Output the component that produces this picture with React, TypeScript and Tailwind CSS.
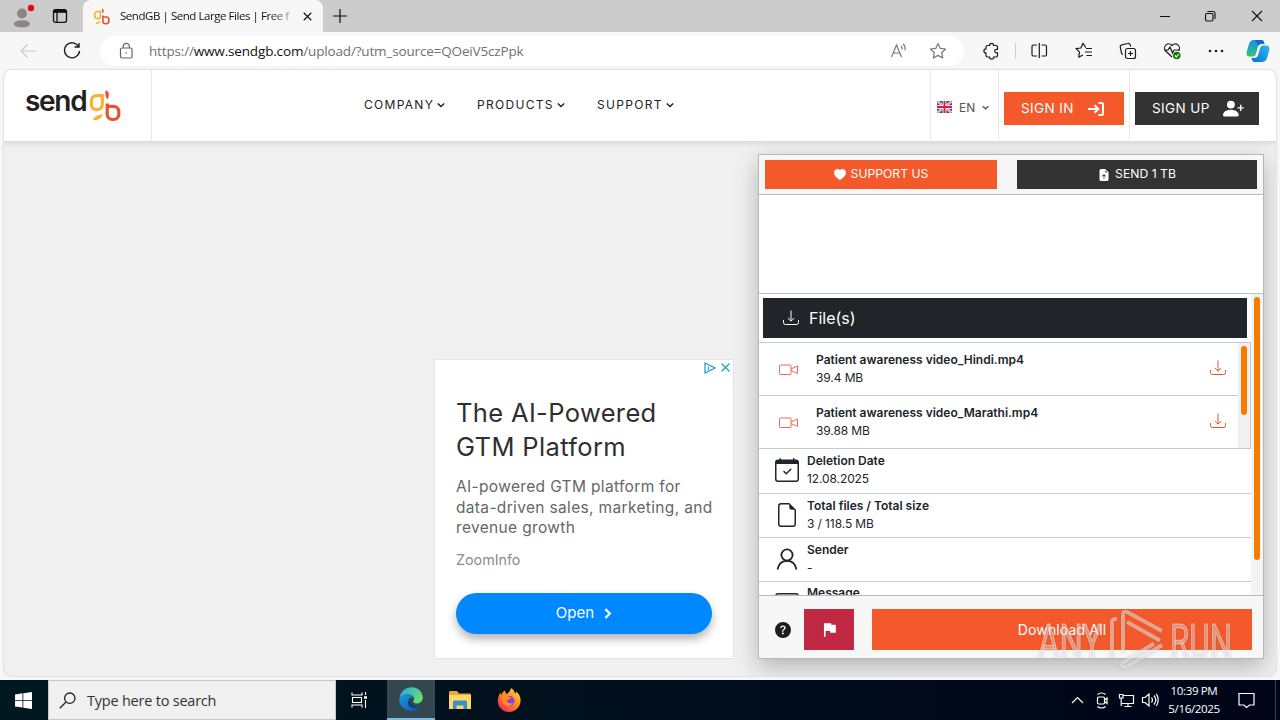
import type { ReactNode } from 'react'
import {
  BsCalendarCheck,
  BsEnvelope,
  BsFileEarmark,
  BsFileEarmarkArrowUpFill,
  BsHeartFill,
  BsPersonPlusFill,
  BsQuestionCircleFill,
} from 'react-icons/bs'
import { MdFlag } from 'react-icons/md'

function GbMark({ className }: { className: string }) {
  return (
    <svg viewBox="0 0 33 33" className={className} fill="none">
      <path d="M14.300 6.700H8.500a5.200 5.200 0 0 0-5.200 5.200v3.600a5.200 5.200 0 0 0 5.200 5.200h.6a5.200 5.200 0 0 0 5.200-5.200z" stroke="#fbb034" strokeWidth="3.200" />
      <path d="M5 31c.8-3.200 4.300-5 10-5.800-1.200 4.300-5.800 6.600-10 5.800z" fill="#fbb034" />
      <path d="M17.800 1c3.200 1.600 4.300 5 1.700 9.500-2.200-2.600-2.800-6.300-1.700-9.500z" fill="#e8532f" />
      <path d="M19.200 14.500v10.800a5.200 5.200 0 0 0 5.200 5.200h1.200a5.200 5.200 0 0 0 5.200-5.200v-2.700a5.200 5.200 0 0 0-5.200-5.200h-6.400" stroke="#e8532f" strokeWidth="3.200" />
    </svg>
  )
}

function TrayDownload({ className }: { className: string }) {
  return (
    <svg viewBox="0 0 16 16" className={className} fill="none" stroke="currentColor" strokeWidth="1">
      <path d="M.5 10v2.500a2 2 0 0 0 2 2h11a2 2 0 0 0 2-2V10M8 .5v10.500M4.800 8L8 11.200 11.200 8" />
    </svg>
  )
}

function SenderIcon({ className }: { className: string }) {
  return (
    <svg viewBox="0 0 24 24" className={className} fill="none" stroke="currentColor" strokeWidth="1.800">
      <circle cx="12" cy="8" r="5.600" />
      <path d="M2.500 22.500C3.500 17 7 13.800 12 13.800s8.500 3.200 9.500 8.700" />
    </svg>
  )
}

function Chevron({ className }: { className: string }) {
  return (
    <svg viewBox="0 0 8 8" className={className} fill="none" stroke="currentColor" strokeWidth="1.500">
      <path d="M.8 2.500L4 5.500l3.200-3" />
    </svg>
  )
}

function TabBar() {
  return (
    <div className="flex h-8 bg-[#cbcbcb] text-[#111]">
      <div className="flex h-8 w-[83px] items-center rounded-br-md">
        <svg viewBox="0 0 24 24" className="ml-[11px] h-6 w-6">
          <circle cx="11" cy="9.500" r="5" fill="#8b8683" />
          <path d="M3 20c0-5 16-5 16 0 0 4.500-16 4.500-16 0z" fill="#8b8683" />
          <circle cx="20" cy="4" r="3.200" fill="#e00b1c" />
        </svg>
        <svg viewBox="0 0 16 16" className="ml-[17px] h-4 w-4" fill="none" stroke="#111" strokeWidth="1.300">
          <rect x="1.500" y="1.700" width="13" height="12.600" rx="2" />
          <path d="M1.500 4h13M5 4v10" />
          <path d="M2 3h12" strokeWidth="2.400" />
        </svg>
      </div>
      <div className="flex w-[240px] items-center rounded-t-lg bg-[#f7f7f7]">
        <GbMark className="ml-[10px] h-[17px] w-[17px]" />
        <span className="ml-[10px] w-[176px] bg-gradient-to-r from-[#111] from-85% to-[#e2e2e2] bg-clip-text font-['Open_Sans','Noto_Sans',sans-serif] text-[11.500px] tracking-[-0.450px] whitespace-nowrap text-transparent">
          SendGB | Send Large Files | Free f
        </span>
        <svg viewBox="0 0 10 10" className="ml-[7px] h-[9px] w-[9px]" stroke="#111" strokeWidth="1.300">
          <path d="M.8.8l8.400 8.400M9.200.8L.8 9.200" />
        </svg>
      </div>
      <svg viewBox="0 0 14 14" className="mt-[9px] ml-[10px] h-[14px] w-[14px]" stroke="#111" strokeWidth="1.200">
        <path d="M7 0v14M0 7h14" />
      </svg>
      <svg viewBox="0 0 104 12" className="mt-[10px] mr-[17px] ml-auto h-3 w-[104px]" fill="none" stroke="#111" strokeWidth="1.100">
        <path d="M1 6.500h10M93 1l10 10M103 1L93 11" />
        <rect x="46.500" y="3.500" width="7.500" height="7.500" rx="1.500" />
        <path d="M48.500 1.500h5.500a2 2 0 0 1 2 2v5.500" />
      </svg>
    </div>
  )
}

function ToolIcon({ className, children }: { className: string; children: ReactNode }) {
  return (
    <svg viewBox="0 0 18 18" className={`h-[18px] w-[18px] shrink-0 ${className}`} fill="none" stroke="currentColor" strokeWidth="1.200">
      {children}
    </svg>
  )
}

function Toolbar() {
  return (
    <div className="flex h-[38px] items-center bg-[#f7f7f7] text-[#1b1b1b]">
      <ToolIcon className="ml-[19px] text-[#c9c9c9]">
        <path d="M17 9H2M8.500 2.500L2 9l6.500 6.500" />
      </ToolIcon>
      <ToolIcon className="ml-[26px]">
        <path d="M15.500 4.500A7.500 7.500 0 1 0 16.500 9M16 1v4h-4.500" strokeWidth="1.400" />
      </ToolIcon>
      <div className="ml-[19px] flex h-[30px] w-[864px] items-center rounded-full bg-white">
        <ToolIcon className="ml-[17px] text-[#666]">
          <rect x="3.500" y="6" width="11.500" height="10" rx="1.500" />
          <path d="M6.300 6V4.300a3 3 0 0 1 6 0V6" />
          <circle cx="9.200" cy="11" r=".8" fill="currentColor" stroke="none" />
        </ToolIcon>
        <span className="ml-[14px] font-['Open_Sans','Noto_Sans',sans-serif] text-[13.500px] tracking-[-0.160px] whitespace-nowrap text-[#707070]">
          https://<span className="text-[#111]">www.sendgb.com</span>/upload/?utm_source=QOeiV5czPpk
        </span>
        <ToolIcon className="ml-auto text-[#777]">
          <path d="M1.500 15L6.500 3l5 12M3.200 11h6.600M11 4c1 .9 1.300 2.200 1 3.500M13 1.800c1.900 1.700 2.500 3.900 2 6.500" />
        </ToolIcon>
        <ToolIcon className="mr-[17px] ml-[21px] text-[#777]">
          <path d="M9 1.500l2.300 4.900 5.300.6-3.900 3.700 1 5.300L9 13.400 4.300 16l1-5.300L1.400 7l5.300-.6z" strokeLinejoin="round" />
        </ToolIcon>
      </div>
      <ToolIcon className="ml-[18px]">
        <path d="M5.500 3.500h2a2.100 2.100 0 0 1 4.200 0H14a1.500 1.500 0 0 1 1.500 1.500v2.300h-1a1.800 1.800 0 0 0 0 3.600h1V13.500a1.500 1.500 0 0 1-1.500 1.500h-2.300a2.100 2.100 0 0 1-4.200 0h-2A1.500 1.500 0 0 1 4 13.500v-2.400a2.100 2.100 0 0 1 0-4.200V5a1.500 1.500 0 0 1 1.500-1.500z" />
      </ToolIcon>
      <div className="ml-[15px] h-4 w-px bg-[#d0d0d0]" />
      <ToolIcon className="ml-[14px]">
        <path d="M7 3H3.500A1.500 1.500 0 0 0 2 4.500v8A1.500 1.500 0 0 0 3.500 14H7M11.500 3H15a1.500 1.500 0 0 1 1.500 1.500v8A1.500 1.500 0 0 1 15 14h-3.500M9.300 1v15" />
      </ToolIcon>
      <ToolIcon className="ml-[27px]">
        <path d="M10.800 5.800L8 1.200 5.800 6 1 6.700l3.500 3.500-.8 5L8 13M11 6.500h6M10 10h7M11.500 13.500H17" strokeLinejoin="round" />
      </ToolIcon>
      <ToolIcon className="ml-[26px]">
        <rect x="6.500" y="6.500" width="10" height="10" rx="2" />
        <path d="M11.500 9v5M9 11.500h5M4 12.500A2 2 0 0 1 2.500 11L1.200 5A2 2 0 0 1 2.800 2.800l6-1.300A2 2 0 0 1 11.300 3l.4 1.500" />
      </ToolIcon>
      <ToolIcon className="ml-[26px]">
        <path d="M9 15L2.500 8.800A4 4 0 0 1 9 3.500a4 4 0 0 1 6.500 5.300M1 8h4l2-3 2.500 6L11 8h6" />
        <circle cx="13.800" cy="13.500" r="3.800" fill="#107c10" stroke="none" />
        <path d="M12 13.500l1.300 1.300 2.400-2.500" stroke="#fff" />
      </ToolIcon>
      <ToolIcon className="ml-[26px]">
        <g fill="currentColor" stroke="none">
          <circle cx="3" cy="9" r="1.300" />
          <circle cx="9" cy="9" r="1.300" />
          <circle cx="15" cy="9" r="1.300" />
        </g>
      </ToolIcon>
      <svg viewBox="0 0 24 24" className="ml-[21px] h-6 w-6 shrink-0">
        <defs>
          <linearGradient id="cpA" x1="0" y1="0" x2="0" y2="1">
            <stop offset="0" stopColor="#1b8fe8" />
            <stop offset="1" stopColor="#35c27c" />
          </linearGradient>
          <linearGradient id="cpB" x1="0" y1="1" x2="1" y2="0">
            <stop offset="0" stopColor="#0b6fe0" />
            <stop offset="1" stopColor="#29bde8" />
          </linearGradient>
        </defs>
        <path d="M8 1h7.500c2 0 2.500 2 3 4h-3c-2 0-3 1-3.600 3l-2 7c-.6 2-1.900 2.500-4 2.500H3.500C1 17.500 0 15.500.8 12.500L3 5c.8-2.600 2.500-4 5-4z" fill="url(#cpA)" />
        <path d="M16 23H8.500c-2 0-2.500-2-3-4h3c2 0 3-1 3.600-3l2-7c.6-2 1.900-2.500 4-2.500h2.400c2.500 0 3.500 2 2.700 5L21 19c-.8 2.600-2.500 4-5 4z" fill="url(#cpB)" />
        <path d="M9 1h6.500c2 0 2.500 2 3 4h-3c-1.500 0-2.500.5-3.100 1.800C11 5 10.500 3 9 1z" fill="#1458c4" opacity=".75" />
      </svg>
    </div>
  )
}

const menus = [
  { label: 'COMPANY', width: 'w-[113px]' },
  { label: 'PRODUCTS', width: 'w-[120px]' },
  { label: 'SUPPORT', width: 'w-[100px]' },
]

function SiteHeader() {
  return (
    <header className="relative flex h-[72px] shrink-0 border-b border-[#dcdcdc] bg-white shadow-[0_2px_5px_rgba(0,0,0,0.09)]">
      <div className="flex w-[148px] items-start border-r border-[#e6e6e6] pl-[21px]">
        <span className="mt-[13px] w-[63px] text-[28px] leading-[36px] font-semibold tracking-[-1.300px] text-[#231f20]">
          send
        </span>
        <GbMark className="mt-[19px] h-[33px] w-[33px]" />
      </div>
      <nav className="ml-[212px] flex items-start pt-[26px] text-[12px] leading-[18px] tracking-[1.300px] text-[#222]">
        {menus.map(({ label, width }) => (
          <div key={label} className={`flex items-center ${width}`}>
            {label}
            <Chevron className="ml-[3px] h-2 w-2" />
          </div>
        ))}
      </nav>
      <div className="ml-auto flex">
        <div className="flex w-[69px] items-center border-x border-[#eaeaea] pt-[3px] pl-[6px] text-[#555]">
          <svg viewBox="0 0 15 12" className="h-[12px] w-[15px]">
            <rect width="15" height="12" rx="1.500" fill="#3f4a9c" />
            <path d="M0 0l15 12M15 0L0 12" stroke="#fff" strokeWidth="2.200" />
            <path d="M0 0l15 12M15 0L0 12" stroke="#d22b3f" strokeWidth=".8" />
            <path d="M7.500 0v12M0 6h15" stroke="#fff" strokeWidth="3.600" />
            <path d="M7.500 0v12M0 6h15" stroke="#d8203a" strokeWidth="2" />
          </svg>
          <span className="ml-[7px] pt-px text-[12px]">EN</span>
          <Chevron className="ml-[7px] h-[7px] w-[7px]" />
        </div>
        <div className="w-[131px] border-r border-[#eaeaea] pt-[22px] pl-[5px]">
          <button className="flex h-[33px] w-[120px] items-center bg-[#f4592b] pl-[17px] text-[13.500px] tracking-[0.400px] text-white">
            SIGN IN
            <svg viewBox="0 0 16 14" className="mr-[20px] ml-auto h-[14px] w-[16px]" fill="none" stroke="#fff" strokeWidth="2">
              <path d="M0 7h10M6.500 3.200L10.300 7l-3.800 3.800M10.500 1h3a1.500 1.500 0 0 1 1.500 1.500v9a1.500 1.500 0 0 1-1.500 1.500h-3" />
            </svg>
          </button>
        </div>
        <div className="w-[146px] pt-[22px] pl-[5px]">
          <button className="flex h-[33px] w-[124px] items-center bg-[#333] pl-[17px] text-[13.500px] tracking-[0.400px] text-white">
            SIGN UP
            <BsPersonPlusFill className="mr-[15px] ml-auto h-[21px] w-[21px]" />
          </button>
        </div>
      </div>
    </header>
  )
}

function AdCard() {
  return (
    <aside className="mt-[217px] h-[300px] w-[300px] border border-[#e4e4e4] bg-white pl-[21px]">
      <div className="flex h-[15px] items-center justify-end gap-[5px] pr-[3px]">
        <svg viewBox="0 0 12 12" className="h-3 w-3" fill="none" stroke="#1fa3c9" strokeWidth="1.300">
          <path d="M1 1l10 5L1 11zM4.500 4.500v3.500" />
        </svg>
        <svg viewBox="0 0 10 10" className="h-[9px] w-[9px]" stroke="#1fa3c9" strokeWidth="1.400">
          <path d="M.5.5l9 9M9.500.5l-9 9" />
        </svg>
      </div>
      <h2 className="mt-[21px] text-[25.500px] leading-[34px] tracking-[0.350px] whitespace-nowrap text-[#2f2f2f]">
        The AI-Powered
        <br />
        GTM Platform
      </h2>
      <p className="mt-[13px] text-[15.500px] leading-[20.500px] tracking-[0.340px] whitespace-nowrap text-[#666]">
        AI-powered GTM platform for
        <br />
        data-driven sales, marketing, and
        <br />
        revenue growth
      </p>
      <p className="mt-[11px] text-[14.300px] leading-[20px] text-[#8c8c8c]">ZoomInfo</p>
      <button className="mt-[23px] flex h-[41px] w-[256px] items-center justify-center gap-[10px] rounded-full bg-[#0088ff] text-[15px] text-white shadow-[0_5px_10px_rgba(0,0,0,0.3)]">
        Open
        <svg viewBox="0 0 8 12" className="h-[11px] w-2" fill="none" stroke="#fff" strokeWidth="2.400">
          <path d="M1.200 1.200L6 6l-4.800 4.800" />
        </svg>
      </button>
    </aside>
  )
}

const files = [
  { name: 'Patient awareness video_Hindi.mp4', size: '39.4 MB' },
  { name: 'Patient awareness video_Marathi.mp4', size: '39.88 MB' },
]

const details = [
  { icon: BsCalendarCheck, title: 'Deletion Date', value: '12.08.2025', row: 'h-[45px] pt-[3px]' },
  { icon: BsFileEarmark, title: 'Total files / Total size', value: '3 / 118.5 MB', row: 'h-[44px] pt-[3px]' },
  { icon: SenderIcon, title: 'Sender', value: '-', row: 'h-[44px] pt-[3px]' },
  { icon: BsEnvelope, title: 'Message', value: '', row: 'h-[45px] pt-[2px]' },
]

function FilePanel() {
  return (
    <section className="mt-[12px] flex h-[505px] w-[506px] flex-col border border-[#b8b8b8] bg-white shadow-[0_8px_22px_rgba(0,0,0,0.25)]">
      <div className="flex h-[40px] shrink-0 items-start justify-between border-b border-[#b8b8b8] bg-[#f7f7f7] px-[6px] pt-[5px] text-[12.200px] text-white">
        <button className="flex h-[29px] w-[232px] items-center justify-center gap-[5px] bg-[#f4592b]">
          <BsHeartFill className="h-[12px] w-[12px]" />
          SUPPORT US
        </button>
        <button className="flex h-[29px] w-[240px] items-center justify-center gap-[5px] bg-[#333]">
          <BsFileEarmarkArrowUpFill className="h-[12px] w-[12px]" />
          SEND 1 TB
        </button>
      </div>
      <div className="h-[99px] shrink-0 border-b border-[#b9c2ca]" />

      <div className="flex h-[301px] shrink-0 overflow-hidden">
        <div className="w-[492px]">
          <div className="mt-[4px] ml-[4px] flex h-[40px] w-[484px] items-center bg-[#212529] pl-[20px] text-[16px] text-white">
            <TrayDownload className="mr-[10px] h-4 w-4" />
            File(s)
          </div>
          <div className="mt-[4px] flex h-[107px] border-y border-r border-[#c4cace]">
            <div className="w-[479px]">
              {files.map(({ name, size }) => (
                <div key={name} className="flex h-[53px] border-b border-[#c4cace]">
                  <svg viewBox="0 0 20 12" className="mt-[21px] ml-[20px] h-[12px] w-5" fill="none" stroke="#ee6a55" strokeWidth="1">
                    <rect x=".5" y="1" width="11.500" height="9.500" rx=".8" />
                    <path d="M12 5l6.500-3v7.500L12 6.500" />
                  </svg>
                  <div className="ml-[17px] pt-[8px] text-[12px] leading-[18px] text-[#212529]">
                    <p className="font-semibold">{name}</p>
                    <p className="tracking-[-0.100px]">{size}</p>
                  </div>
                  <TrayDownload className="mt-[17px] mr-[12px] ml-auto h-4 w-4 text-[#d9562f]" />
                </div>
              ))}
            </div>
            <div className="flex-1 bg-[#f0f0f0] pt-[3px] pl-[3px]">
              <div className="h-[69px] w-[6px] rounded-full bg-[#f57c00]" />
            </div>
          </div>
          {details.map(({ icon: Icon, title, value, row }) => (
            <div key={title} className={`flex border-b border-[#c4cace] text-[#212529] ${row}`}>
              <Icon className="mt-[6px] ml-[16px] h-6 w-6" />
              <div className="ml-[8px] text-[12px] leading-[18px]">
                <p className="font-semibold">{title}</p>
                <p className="tracking-[-0.100px]">{value}</p>
              </div>
            </div>
          ))}
        </div>
        <div className="flex-1 bg-[#f3f3f3] pt-[3px] pl-[3px]">
          <div className="h-[263px] w-[6px] rounded-full bg-[#f57c00]" />
        </div>
      </div>

      <div className="flex flex-1 items-start border-t border-[#b8b8b8] bg-[#f7f7f7] pt-[13px]">
        <BsQuestionCircleFill className="mt-[13px] ml-[16px] h-4 w-4 text-[#1b1f23]" />
        <button className="ml-[13px] flex h-[41px] w-[50px] items-center justify-center bg-[#c12842] text-white">
          <MdFlag className="h-[19px] w-[19px]" />
        </button>
        <button className="ml-[18px] h-[41px] w-[380px] bg-[#f4592b] text-[14px] tracking-[0.150px] text-white">Download All</button>
      </div>
    </section>
  )
}

function Watermark() {
  return (
    <svg viewBox="0 0 200 64" className="pointer-events-none absolute top-[608px] left-[1036px] h-16 w-[200px]" fill="none" stroke="#fff" strokeOpacity=".45">
      <g style={{ filter: 'drop-shadow(0 0 1px rgba(90,90,90,.55))' }}>
        <g fontFamily="Roboto, sans-serif" fontSize="49" strokeWidth="1" fill="#fff" fillOpacity=".35">
          <text x="2" y="50" textLength="64" lengthAdjust="spacingAndGlyphs">
            ANY
          </text>
          <text x="134" y="50" textLength="62" lengthAdjust="spacingAndGlyphs">
            RUN
          </text>
        </g>
        <path
          d="M81 11h-2a3 3 0 0 0-3 3v36M87 45V7c0-3 2-4 5-2.500l34 18.500M91 14l33 18.500M126 37L91 58.500c-4 1.500-6-.5-4-3.500l31-19.500"
          strokeWidth="4"
          strokeLinejoin="round"
        />
      </g>
    </svg>
  )
}

function Taskbar() {
  return (
    <footer className="flex h-10 bg-gradient-to-r from-[#001820] to-[#000518] text-white">
      <div className="flex w-[48px] items-center pl-[15px]">
        <svg viewBox="0 0 17 17" className="h-[17px] w-[17px]" fill="#fff">
          <path d="M0 2.400L7.500 1.300V8H0zM8.300 1.200L17 0v8H8.300zM0 8.800h7.500v6.800L0 14.500zM8.300 8.800H17V17l-8.700-1.200z" />
        </svg>
      </div>
      <div className="flex w-[288px] items-center border border-[#c3c7c9] bg-[#f0f0f0] text-[#333]">
        <svg viewBox="0 0 17 17" className="ml-[10px] h-[17px] w-[17px]" fill="none" stroke="#222" strokeWidth="1.300">
          <circle cx="10.800" cy="6.200" r="5.200" />
          <path d="M7 10L.8 16.200" />
        </svg>
        <span className="ml-[11px] pt-px font-['Open_Sans','Noto_Sans',sans-serif] text-[14.500px] tracking-[-0.220px]">Type here to search</span>
      </div>
      <div className="flex w-[51px] items-center pl-[15px]">
        <svg viewBox="0 0 17 16" className="h-4 w-[17px]" fill="none" stroke="#fff" strokeWidth="1.100">
          <path d="M1 .5v2.500h10V.5M1 15.500V13h10v2.500M14.500 0v3M14.500 8v8" />
          <rect x="1.500" y="5.500" width="9" height="5" />
          <path d="M13 5.500h3" strokeWidth="2.500" />
        </svg>
      </div>
      <div className="flex w-[48px] items-center justify-center border-b-2 border-[#76b9ed] bg-[#34474f]">
        <svg viewBox="0 0 24 24" className="h-6 w-6">
          <defs>
            <linearGradient id="edgeTop" x1="0" y1="0" x2="1" y2=".5">
              <stop offset="0" stopColor="#2aa7e8" />
              <stop offset="1" stopColor="#63dc72" />
            </linearGradient>
            <linearGradient id="edgeSide" x1="0" y1="0" x2="1" y2="1">
              <stop offset="0" stopColor="#1b9de2" />
              <stop offset="1" stopColor="#0c4fa5" />
            </linearGradient>
          </defs>
          <path d="M.5 11C1.500 4 7 .2 12.500.2 19 .2 23.800 5 23.800 10.500c0 3.500-2.600 6-6 6-3 0-4-1.200-3.500-2.200 2-3-.3-6.800-4.300-6.800C5.500 7 2 9 .5 11z" fill="url(#edgeTop)" />
          <path d="M.3 12C1.500 8.500 5 6.500 8.500 7c3 .3 5 1.800 5.800 4-2-1.500-5 0-5.300 3.500-.3 4 3.500 7 8 6.500 2-.2 3.500-.8 4.700-1.500-2.500 3-5.700 4.500-9.700 4.500C5.500 24-.2 18.500.3 12z" fill="url(#edgeSide)" />
          <path d="M9 14.500c-.3 4 3.500 7 8 6.500 2-.2 3.500-.8 4.700-1.500-5 1.500-8.200-.5-9.200-3.500z" fill="#0a3f86" />
        </svg>
      </div>
      <div className="flex w-[49px] items-center justify-center">
        <svg viewBox="0 0 22 20" className="h-5 w-[22px]">
          <path d="M0 2.500C0 1.500.6 1 1.500 1H8l2 2.500h10.500c.9 0 1.500.5 1.500 1.500v13H0z" fill="#e8a92c" />
          <path d="M0 5h22v14H0z" fill="#fdd76b" />
          <path d="M4 19v-7a1.500 1.500 0 0 1 1.500-1.500h11A1.500 1.500 0 0 1 18 12v7h-3.500v-3.500h-7V19z" fill="#3f8ec9" />
        </svg>
      </div>
      <div className="flex w-[49px] items-center justify-center">
        <svg viewBox="0 0 24 24" className="h-6 w-6">
          <defs>
            <linearGradient id="fox" x1="1" y1="0" x2=".2" y2="1">
              <stop offset="0" stopColor="#ffe14a" />
              <stop offset=".5" stopColor="#ff8a1f" />
              <stop offset="1" stopColor="#f0265e" />
            </linearGradient>
          </defs>
          <path d="M14 0c2.500 1.500 3.500 3.500 4 5.500.8-.3 1-1 1-2C22.500 6 24 9.500 23.500 13.500 23 19.500 18 24 12 24S.8 19.300.8 13c0-3 .9-6 2.700-8.500 0 1 .3 1.800.8 2.200C5 5 6.300 3.500 8 2.500c0 1.500.8 2.800 2 3.500C12 4.500 13.500 2.500 14 0z" fill="url(#fox)" />
          <circle cx="12.500" cy="13" r="5" fill="#8b3fe0" />
          <path d="M4 8c2-1.500 5-1.500 7 .5l3 .8c-.5 2-3 2-4 3.200-.3 2.300 3 4 6 2-1 4-7 5-9.500 1.500C5 14 5 11 4 8z" fill="#ff8a1f" />
        </svg>
      </div>
      <div className="ml-auto flex items-center">
        <svg viewBox="0 0 88 18" className="h-[18px] w-[88px]" fill="none" stroke="#fff" strokeWidth="1.200">
          <path d="M1 12l5.500-5.500L12 12" />
          <rect x="26.500" y="6" width="7" height="7" rx="1.200" />
          <path d="M33.500 9l2.500-2v5.500l-2.500-2M26.500 3.500c2-2 6-2 8 0M26.500 15.500c2 2 6 2 8 0" />
          <path d="M52 4.500h10.500v8H51M57 12.500v3M53.500 15.500h7M48.500 3.500H52v3.500h-3.500zM50.200 7v8" />
          <path d="M71.500 6.500h2.500l4-3.500v12l-4-3.500h-2.500zM80.500 6.500c1.200 1.500 1.200 3.500 0 5M83 4.500c2.200 2.700 2.200 6.300 0 9M85.300 2.800c2.500 3.500 2.500 8.700 0 12.200" />
        </svg>
        <div className="ml-[3px] w-[64px] text-center font-['Open_Sans','Noto_Sans',sans-serif] text-[11.600px] leading-[18px] tracking-[-0.400px] whitespace-nowrap">
          <p>10:39 PM</p>
          <p>5/16/2025</p>
        </div>
        <svg viewBox="0 0 17 17" className="ml-[12px] h-[17px] w-[17px]" fill="none" stroke="#fff" strokeWidth="1.200">
          <path d="M1 1.500h15v11.500h-4.500L8.500 15.500 6 13H1z" />
        </svg>
        <div className="mr-[4px] ml-[20px] h-10 w-px bg-[#3b4250]" />
      </div>
    </footer>
  )
}

export default function App() {
  return (
    <div className="relative flex h-[720px] w-[1280px] flex-col overflow-hidden bg-[#f7f7f7] font-['Inter','Liberation_Sans',sans-serif]">
      <TabBar />
      <Toolbar />
      <div className="mx-[4px] flex h-[606px] flex-col overflow-hidden rounded-lg bg-[#f0f0f0] shadow-[0_0_2px_rgba(0,0,0,0.3)]">
        <SiteHeader />
        <main className="flex flex-1 items-start pl-[430px]">
          <AdCard />
          <div className="ml-[24px]">
            <FilePanel />
          </div>
        </main>
      </div>
      <div className="h-[4px] shrink-0" />
      <Taskbar />
      <Watermark />
    </div>
  )
}
